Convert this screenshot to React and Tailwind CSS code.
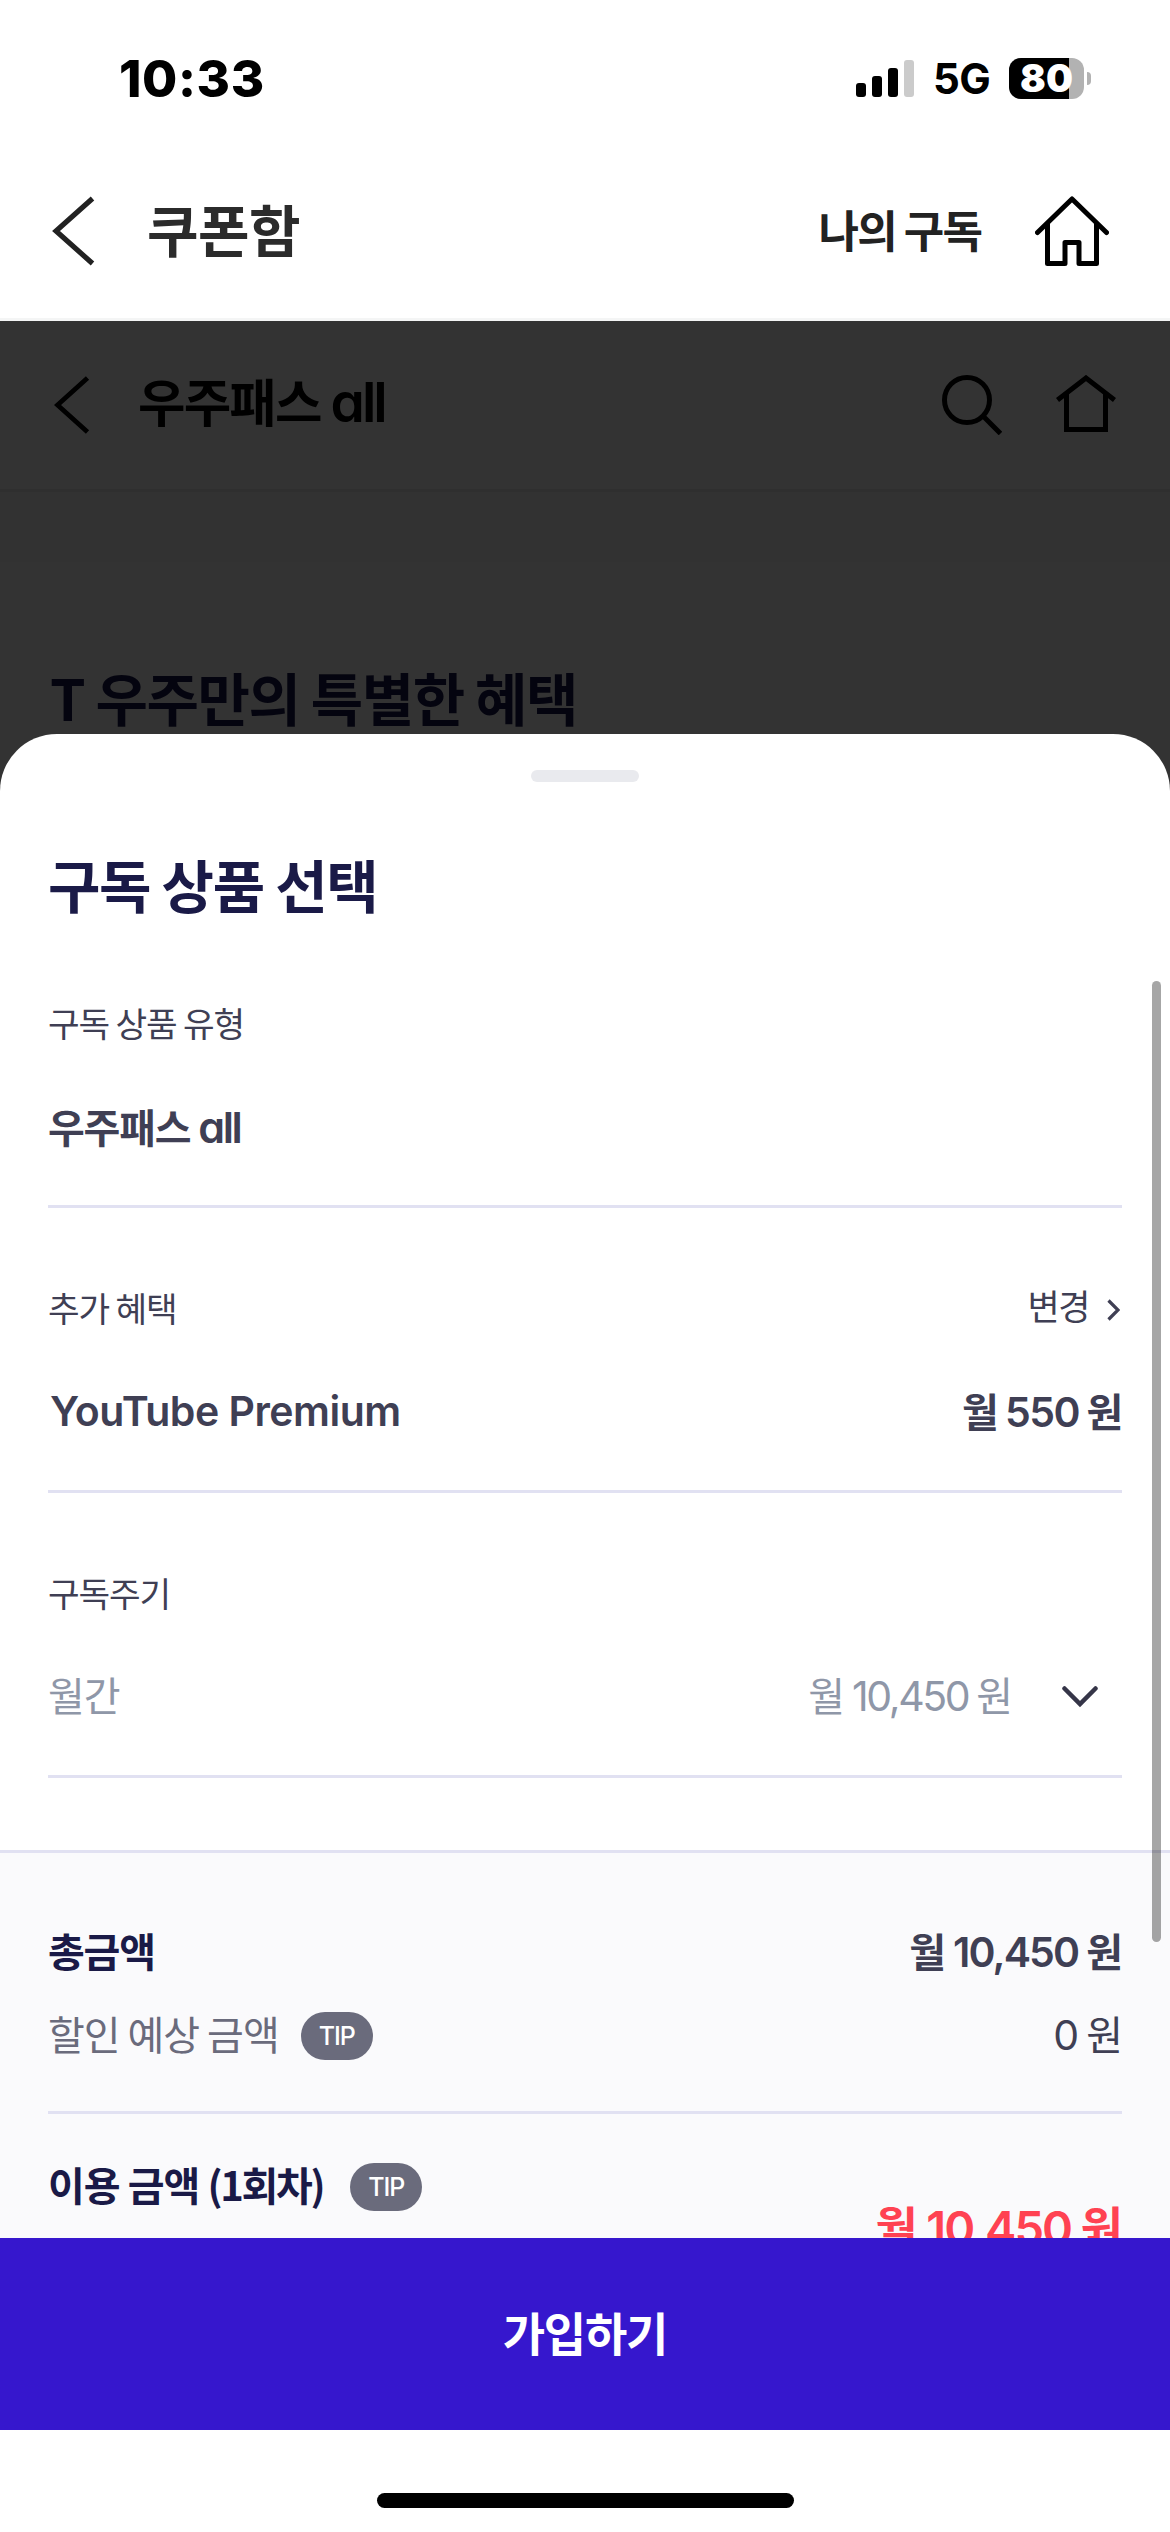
import React from 'react';

const divider = 'border-b-[3px] border-[#e1e1f2]';
const latin = "font-['Inter'] leading-none [font-feature-settings:'cv11']";

const SignalIcon = () => (
  <div className="flex h-[37px] items-end gap-[6px]">
    <div className="h-[14px] w-[10px] rounded-[3px] bg-black" />
    <div className="h-[21px] w-[10px] rounded-[3px] bg-black" />
    <div className="h-[29px] w-[10px] rounded-[3px] bg-black" />
    <div className="h-[37px] w-[10px] rounded-[3px] bg-[#cbcbcb]" />
  </div>
);

const BatteryIcon = () => (
  <div className="flex items-center gap-[3px]">
    <div className="relative h-[41px] w-[75px] rounded-[12px] bg-[#b2b2b2]">
      <div className="h-full w-[60px] rounded-l-[12px] bg-black" />
      <span className="absolute inset-0 flex items-center justify-center text-[38px] leading-none font-black text-white">
        80
      </span>
    </div>
    <div className="h-[13px] w-[4px] rounded-r-full bg-[#b2b2b2]" />
  </div>
);

const StatusBar = () => (
  <div className="flex h-[144px] items-center justify-between pt-3 pr-[79px] pl-[119px] font-['Inter']">
    <span className="text-[51px] leading-none font-extrabold tracking-[0.6px]">10:33</span>
    <div className="flex items-center">
      <SignalIcon />
      <span className="mt-[2px] ml-[19px] w-[76px] text-[42px] leading-none font-bold tracking-[-0.5px]">5G</span>
      <BatteryIcon />
    </div>
  </div>
);

const AppHeader = () => (
  <header className="flex h-[177px] items-center border-b-[3px] border-[#f4f5f5] pr-[61px] pl-[52px]">
    <svg className="h-[70px] w-[43px]" viewBox="0 0 43 70" fill="none" stroke="#222" strokeWidth="5.2">
      <path d="M40.5 2.5 4 35l36.500 32.500" />
    </svg>
    <h1 className="mb-[7px] ml-[52px] text-[56px] leading-none font-bold tracking-[-0.5px] text-[#2b2b2b]">쿠폰함</h1>
    <span className="mb-[5px] ml-auto text-[44px] leading-none font-bold tracking-[-1.9px] text-[#222]">나의 구독</span>
    <svg
      className="ml-[54px] h-[70px] w-[74px]"
      viewBox="0 0 74 70"
      fill="none"
      stroke="#000"
      strokeWidth="5"
      strokeLinecap="round"
      strokeLinejoin="round"
    >
      <path d="M2.500 36.500 37 3l34.500 33.500" />
      <path d="M12.500 28v39.500h17.500v-21h14v21h17.500V28" />
    </svg>
  </header>
);

const DimmedPage = () => (
  <div className="h-full bg-white text-black">
    <div className="flex h-[171px] items-center border-b-[3px] border-[#eaeaea] pr-[54px] pl-[54px]">
      <svg className="h-[58px] w-[36px]" viewBox="0 0 36 58" fill="none" stroke="#000" strokeWidth="4.800">
        <path d="M33.500 2 3.500 29l30 27" />
      </svg>
      <h2 className="mb-[6px] ml-[48px] text-[51.600px] leading-none font-bold tracking-[-1.800px]">
        우주패스 <span className={`${latin} text-[55px] font-semibold tracking-[-3px]`}>all</span>
      </h2>
      <svg className="ml-auto h-[60px] w-[60px]" viewBox="0 0 60 60" fill="none" stroke="#000" strokeWidth="5">
        <circle cx="25" cy="25" r="22.500" />
        <path d="M41 41l17.500 17.500" />
      </svg>
      <svg className="mb-[3px] ml-[54px] h-[57px] w-[60px]" viewBox="0 0 60 57" fill="none" stroke="#000" strokeWidth="5">
        <path d="M1.500 25 30 3l28.500 22" />
        <path d="M10.500 19v35.500h39V19" />
      </svg>
    </div>
    <div className="h-[70px] bg-[#f7f7f7]" />
    <h2 className="mt-[104px] pl-[50px] text-[57px] leading-[60px] font-bold tracking-[-1.500px] text-[#18184a]">
      T 우주만의 특별한 혜택
    </h2>
  </div>
);

const Tip = () => (
  <span className="mt-[6px] flex h-12 w-[72px] items-center justify-center rounded-[24px] bg-[#6a6b7c] font-['Inter'] text-[25px] leading-none font-medium tracking-[-1px] text-white">
    TIP
  </span>
);

const Field = ({ label, action, children }) => (
  <div className={`${divider} h-[285px] pt-[78px]`}>
    <div className="flex h-[42px] items-center justify-between text-[34.400px] leading-none tracking-[-1.150px] text-[#3f3f54]">
      <span>{label}</span>
      {action}
    </div>
    <div className="mt-[51px] flex h-[60px] items-center justify-between text-[40px] leading-[60px] tracking-[-1px] text-[#3f3f54]">
      {children}
    </div>
  </div>
);

const SubscriptionSheet = () => (
  <section className="absolute inset-x-0 bottom-0 flex h-[1696px] flex-col rounded-t-[57px] bg-white">
    <div className="mx-auto mt-9 h-3 w-[108px] shrink-0 rounded-full bg-[#e9eaee]" />
    <h2 className="mt-[71px] pl-12 text-[57px] leading-[60px] font-bold tracking-[-1.400px] text-[#1a1a47]">구독 상품 선택</h2>

    <div className="mt-[10px] px-12">
      <Field label="구독 상품 유형">
        <span className="mt-[3px] font-bold tracking-[-1.200px]">
          우주패스 <span className={`${latin} text-[43px] font-semibold tracking-[-2.400px]`}>all</span>
        </span>
      </Field>
      <Field
        label="추가 혜택"
        action={
          <span className="flex items-center">
            <span className="mb-[6px] text-[35px] tracking-[-1.400px]">변경</span>
            <svg className="mt-[6px] mr-[2px] ml-[18px] h-[22px] w-[13px]" viewBox="0 0 13 22" fill="none" stroke="#3f3f54" strokeWidth="3.200">
              <path d="M1.500 1.500 11 11l-9.500 9.500" />
            </svg>
          </span>
        }
      >
        <span className={`${latin} mt-[5px] ml-[2px] text-[41px] font-semibold tracking-[-0.500px]`}>YouTube Premium</span>
        <span className="mt-[2px] font-bold tracking-[-1.400px]">
          월 <span className={`${latin} text-[41px] font-semibold tracking-[-1.600px]`}>550</span> 원
        </span>
      </Field>
      <Field label="구독주기">
        <span className="text-[#8f97a8]">월간</span>
        <span className="flex items-center text-[#8f97a8]">
          <span>
            월 <span className={`${latin} text-[41px] tracking-[-2.400px]`}>10,450</span> 원
          </span>
          <svg className="mt-[6px] mr-[24px] ml-[50px] h-[22px] w-[36px]" viewBox="0 0 36 22" fill="none" stroke="#353548" strokeWidth="4.500" strokeLinecap="round">
            <path d="M2.500 2.500 18 18 33.500 2.500" />
          </svg>
        </span>
      </Field>
    </div>

    <div className="mt-[72px] h-[388px] overflow-hidden border-t-[3px] border-[#e1e1f2] bg-[#fafafc] px-12 pt-[67px] text-[40px] leading-[60px] tracking-[-1px]">
      <div className="flex justify-between">
        <span className="font-bold tracking-[-1.200px] text-[#1a1a47]">총금액</span>
        <span className="font-bold text-[#3f3f54]">
          월 <span className={`${latin} text-[41px] font-semibold tracking-[-1.900px]`}>10,450</span> 원
        </span>
      </div>
      <div className={`${divider} mt-[23px] flex h-[111px] justify-between`}>
        <div className="flex h-[60px] items-center gap-[22px] text-[#6a6b7c]">
          <span>할인 예상 금액</span>
          <Tip />
        </div>
        <span className="text-[#3f3f54]">
          <span className={`${latin} text-[41px]`}>0</span> 원
        </span>
      </div>
      <div className="mt-10 flex justify-between">
        <div className="flex h-[60px] items-center gap-[27px] font-bold text-[#1a1a47]">
          <span>
            이용 금액 <span className="tracking-[-2.300px]">(1회차)</span>
          </span>
          <Tip />
        </div>
        <span className="mt-[41px] text-[46px] font-bold text-[#ff4252]">
          월 <span className={`${latin} text-[47px] font-semibold tracking-[-1.900px]`}>10,450</span> 원
        </span>
      </div>
    </div>

    <button className="h-[192px] w-full shrink-0 bg-[#3617cd] pb-[6px] text-[46px] leading-none font-bold tracking-[-1.200px] text-white">
      가입하기
    </button>

    {/* scroll thumb */}
    <div className="absolute top-[247px] right-[9px] h-[961px] w-[9px] rounded-full bg-black/35" />
  </section>
);

export default function App() {
  return (
    <div className="flex h-[2532px] w-[1170px] flex-col overflow-hidden bg-white font-['Noto_Sans_CJK_KR',sans-serif] text-black">
      <StatusBar />
      <AppHeader />
      <main className="relative h-[2109px] overflow-hidden">
        <DimmedPage />
        <div className="absolute inset-0 bg-black/80" />
        <SubscriptionSheet />
      </main>
      <div className="mx-auto mt-[63px] h-[15px] w-[417px] rounded-full bg-black" />
    </div>
  );
}
